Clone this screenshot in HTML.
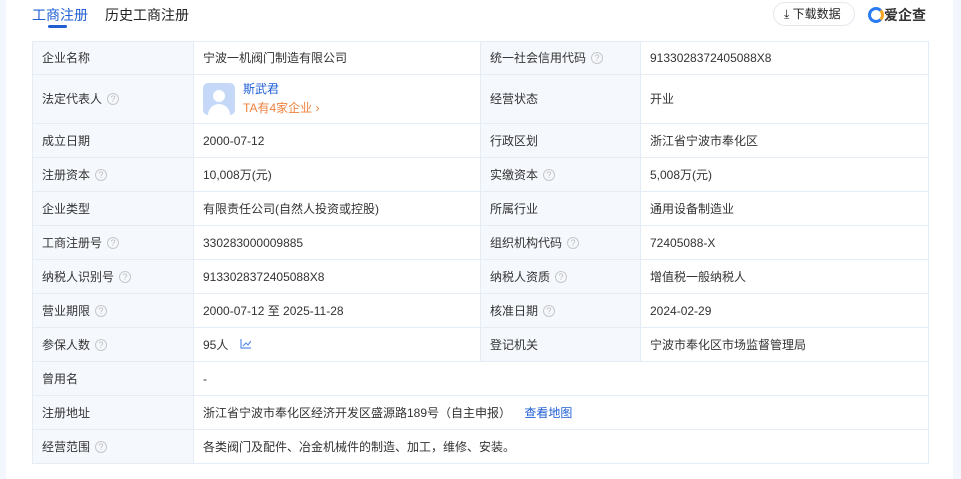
<!DOCTYPE html>
<html><head><meta charset="utf-8"><style>
*{margin:0;padding:0;box-sizing:border-box}
body{width:961px;height:479px;background:#f3f6fd;font-family:"Liberation Sans","Noto Sans CJK SC",sans-serif;font-size:12px;color:#333;overflow:hidden;position:relative}
.panel{position:absolute;left:6px;top:0;width:947px;height:479px;background:#fff}
.tab{position:absolute;top:5px;font-size:14px;color:#222}
.tab.a{color:#1f5fd6}
.ul{position:absolute;left:48px;top:25px;width:19px;height:3px;background:#1f5fd6;border-radius:2px}
.btn{position:absolute;left:773px;top:2px;width:82px;height:24px;border:1px solid #e6e8ee;border-radius:12px;font-size:12px;color:#222;line-height:22px;padding-left:10px}
.logo{position:absolute;left:868px;top:5px;font-size:14px;font-weight:bold;color:#333}
table{position:absolute;left:32px;top:41px;width:896px;border-collapse:collapse;table-layout:fixed}
td{border:1px solid #e4ecf6;padding:0 9px;vertical-align:middle;white-space:nowrap;line-height:16px}
tr{height:34px}
td.l{background:#f5f8fd;color:#333}
.q{display:inline-block;width:12px;height:12px;border:1px solid #c8c8c8;border-radius:50%;font-size:9px;line-height:10px;text-align:center;color:#bbb;margin-left:5px;vertical-align:top;margin-top:2px}
a{color:#1f5fd6;text-decoration:none}
</style></head><body>
<div class="panel"></div>
<div class="tab a" style="left:32px">工商注册</div>
<div class="ul"></div>
<div class="tab" style="left:105px">历史工商注册</div>
<div class="btn">⤓ 下载数据</div>
<div class="logo"><span style="display:inline-block;width:16px;height:16px;border:3px solid #2b7bf0;border-radius:50%;vertical-align:-3px;border-right-color:#f5a623"></span>爱企查</div>
<table>
<colgroup><col style="width:161px"><col style="width:287px"><col style="width:160px"><col style="width:288px"></colgroup>
<tr style="height:33px"><td class="l">企业名称</td><td>宁波一机阀门制造有限公司</td><td class="l">统一社会信用代码<span class="q">?</span></td><td>9133028372405088X8</td></tr>
<tr style="height:49px"><td class="l">法定代表人<span class="q">?</span></td><td><div style="position:relative;height:34px"><div style="position:absolute;left:0;top:1px;width:32px;height:32px;border-radius:5px;background:#c5d8f7;overflow:hidden"><div style="position:absolute;left:10px;top:7px;width:12px;height:12px;border-radius:50%;background:#fff"></div><div style="position:absolute;left:5px;top:21px;width:22px;height:16px;border-radius:11px 11px 0 0;background:#fff"></div></div><div style="position:absolute;left:40px;top:-1px;color:#1f5fd6">斯武君</div><div style="position:absolute;left:40px;top:18px;color:#f0803c">TA有4家企业 ›</div></div></td><td class="l">经营状态</td><td>开业</td></tr>
<tr><td class="l">成立日期</td><td>2000-07-12</td><td class="l">行政区划</td><td>浙江省宁波市奉化区</td></tr>
<tr><td class="l">注册资本<span class="q">?</span></td><td>10,008万(元)</td><td class="l">实缴资本<span class="q">?</span></td><td>5,008万(元)</td></tr>
<tr><td class="l">企业类型</td><td>有限责任公司(自然人投资或控股)</td><td class="l">所属行业</td><td>通用设备制造业</td></tr>
<tr><td class="l">工商注册号<span class="q">?</span></td><td>330283000009885</td><td class="l">组织机构代码<span class="q">?</span></td><td>72405088-X</td></tr>
<tr><td class="l">纳税人识别号<span class="q">?</span></td><td>9133028372405088X8</td><td class="l">纳税人资质<span class="q">?</span></td><td>增值税一般纳税人</td></tr>
<tr><td class="l">营业期限<span class="q">?</span></td><td>2000-07-12 至 2025-11-28</td><td class="l">核准日期<span class="q">?</span></td><td>2024-02-29</td></tr>
<tr><td class="l">参保人数<span class="q">?</span></td><td>95人 <svg width="11" height="10" viewBox="0 0 11 10" style="margin-left:8px;vertical-align:0"><path d="M1 0V9H11M3 7L6 4L8 6L11 2" fill="none" stroke="#5b8ff0" stroke-width="1.2"/></svg></td><td class="l">登记机关</td><td>宁波市奉化区市场监督管理局</td></tr>
<tr><td class="l">曾用名</td><td colspan="3">-</td></tr>
<tr><td class="l">注册地址</td><td colspan="3">浙江省宁波市奉化区经济开发区盛源路189号（自主申报） <a style="margin-left:10px">查看地图</a></td></tr>
<tr><td class="l">经营范围<span class="q">?</span></td><td colspan="3">各类阀门及配件、冶金机械件的制造、加工，维修、安装。</td></tr>
</table>
</body></html>
